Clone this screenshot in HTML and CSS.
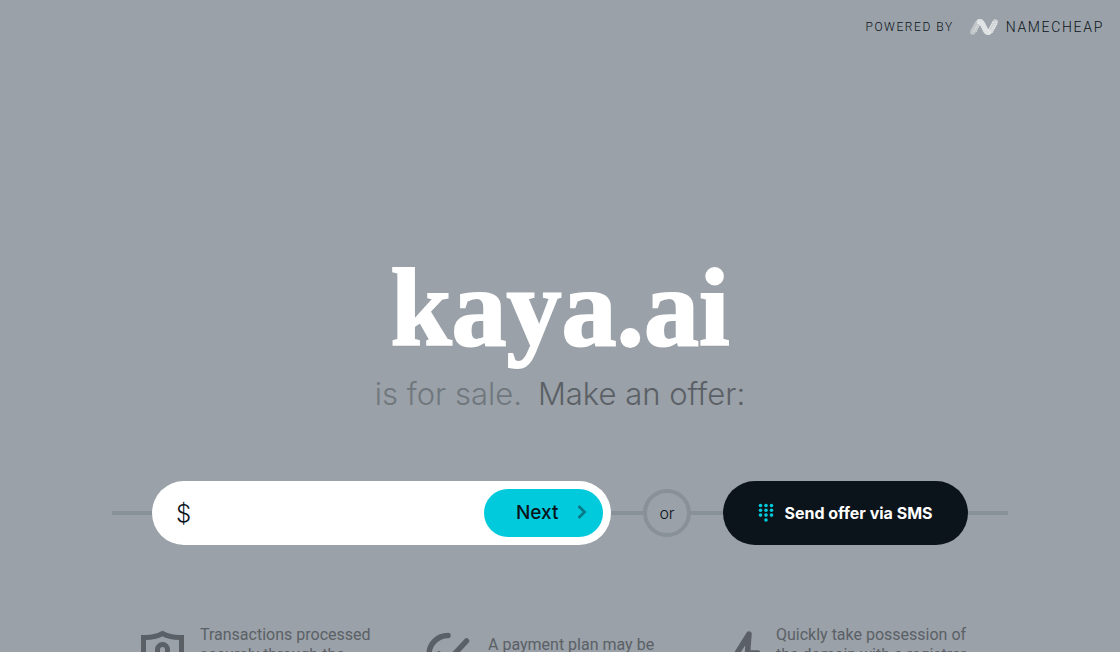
FILE: index.html
```html
<!DOCTYPE html>
<html lang="en">
<head>
<meta charset="utf-8">
<meta name="viewport" content="width=device-width, initial-scale=1">
<title>kaya.ai is for sale</title>
<link rel="stylesheet" href="styles.css">
</head>
<body>
<header class="topbar">
  <span class="powered">POWERED BY</span>
  <a class="brand" href="#">
    <svg class="brand-logo" viewBox="0 0 28 16" fill="none" stroke-linecap="round" stroke-linejoin="round" aria-hidden="true">
      <path d="M2.800 13 7 5Q8.500 2.800 10.500 2.800" stroke="#c0c5c8" stroke-width="5.500"/>
      <path d="M17.500 13.200Q19.500 13.200 21 11L25.200 3" stroke="#ced2d4" stroke-width="5.500"/>
      <path d="M9.500 2.800Q11.500 2.800 12.500 5L15.500 11Q16.500 13.200 18.500 13.200" stroke="#e0e3e4" stroke-width="5.500"/>
      <path d="M4 12 8.500 4M6.500 12 9.500 6M20.500 13 26 3M18.500 11 23.500 2.500M22.500 13 27 4.500" stroke="#f9fafa" stroke-width="1.100" stroke-dasharray="0 2.200"/>
    </svg>
    <span class="brand-name">NAMECHEAP</span>
  </a>
</header>
<main class="page">
  <h1 class="domain">kaya.ai</h1>
  <p class="tagline"><span class="sale">is for sale.</span><span class="offer">Make an offer:</span></p>
  <form class="offer-row">
    <div class="amount">
      <label class="currency" for="amount">$</label>
      <input class="amount-input" id="amount" type="text" inputmode="numeric">
      <button class="next" type="submit">
        <span>Next</span>
        <svg class="chevron" viewBox="0 0 10 14" fill="none" stroke="#087b88" stroke-width="2.800" aria-hidden="true"><path d="M1.500 1 7.500 7 1.500 13"/></svg>
      </button>
    </div>
    <span class="or">or</span>
    <button class="sms" type="button">
      <svg class="keypad" viewBox="0 0 16 20" fill="#00cadb" aria-hidden="true">
        <circle cx="2.500" cy="2.500" r="1.800"/><circle cx="8" cy="2.500" r="1.800"/><circle cx="13.500" cy="2.500" r="1.800"/>
        <circle cx="2.500" cy="7.300" r="1.800"/><circle cx="8" cy="7.300" r="1.800"/><circle cx="13.500" cy="7.300" r="1.800"/>
        <circle cx="2.500" cy="12.100" r="1.800"/><circle cx="8" cy="12.100" r="1.800"/><circle cx="13.500" cy="12.100" r="1.800"/>
        <circle cx="8" cy="17" r="1.800"/>
      </svg>
      <span>Send offer via SMS</span>
    </button>
  </form>
  <section class="features">
    <div class="feature">
      <svg class="feature-icon" viewBox="0 0 48 48" fill="none" stroke="#5a6066" stroke-width="5" aria-hidden="true">
        <path d="M7.500 8.500Q18 9 26.500 4.500 35 9 45.500 8.500V25Q45.500 38 26.500 45 7.500 38 7.500 25Z"/>
        <path d="M21.500 25V20.500A5 5 0 0 1 31.500 20.500V25"/><path d="M18 24H35V35H18Z" fill="#5a6066" stroke="none"/>
      </svg>
      <p class="feature-text">Transactions processed<br>securely through the</p>
    </div>
    <div class="feature feature-short">
      <svg class="feature-icon" viewBox="0 0 48 48" fill="none" stroke="#5a6066" stroke-width="5.500" stroke-linecap="round" stroke-linejoin="round" aria-hidden="true">
        <path d="M24 6.500A19 19 0 1 0 43 26M15 25 23 33 42.500 12"/>
      </svg>
      <p class="feature-text">A payment plan may be</p>
    </div>
    <div class="feature">
      <svg class="feature-icon" viewBox="0 0 48 48" fill="none" stroke="#5a6066" stroke-width="5.500" stroke-linecap="round" stroke-linejoin="round" aria-hidden="true">
        <path d="M37 5 22 29H32L30 46 46 24H35.500Z"/>
      </svg>
      <p class="feature-text">Quickly take possession of<br>the domain with a registrar</p>
    </div>
  </section>
</main>
</body>
</html>
```
FILE: styles.css
```css
* { box-sizing: border-box; }
body {
  margin: 0;
  height: 100vh;
  overflow: hidden;
  background: #9aa1a8;
  color: #0b141a;
  font-family: Inter, "Open Sans", sans-serif;
}
.topbar {
  display: flex;
  justify-content: flex-end;
  align-items: center;
  gap: 16px;
  padding: 16px 16px 0;
  height: 38px;
  font-family: Roboto, sans-serif;
  font-weight: 300;
}
.powered { font-size: 12px; letter-spacing: 0.13em; }
.brand {
  display: flex;
  align-items: center;
  gap: 8px;
  color: inherit;
  text-decoration: none;
}
.brand-logo { width: 28px; height: 16px; }
.brand-name { font-size: 14px; letter-spacing: 0.12em; }
.page {
  width: 80%;
  margin: 0 auto;
  padding-top: 210px;
}
.domain {
  margin: 0;
  text-align: center;
  color: #fff;
  font: bold 110px/120px "Liberation Serif", serif;
  -webkit-text-stroke: 2px #fff;
  text-shadow: 0 1px 1px #7d858c;
}
.tagline {
  display: flex;
  justify-content: center;
  gap: 16px;
  margin: 4px 0 0;
  font-size: 31px;
  line-height: 44px;
  font-weight: 300;
}
.sale { color: #70777d; }
.offer { color: #5a6066; }
.offer-row {
  display: flex;
  align-items: center;
  gap: 32px;
  margin-top: 65px;
  padding: 0 40px;
  background: linear-gradient(#899198, #899198) center / 100% 4px no-repeat;
}
.amount {
  flex: 1;
  min-width: 0;
  display: flex;
  align-items: center;
  height: 64px;
  padding: 8px 8px 8px 24px;
  border-radius: 32px;
  background: #fff;
}
.currency { font-size: 24px; font-weight: 300; }
.amount-input {
  flex: 1;
  min-width: 0;
  height: 48px;
  padding: 0 8px;
  border: 0;
  outline: 0;
  background: transparent;
  font: 300 24px Inter, sans-serif;
}
.next {
  display: flex;
  align-items: center;
  justify-content: space-between;
  width: 119px;
  height: 48px;
  padding: 0 16px 2px 32px;
  border: 0;
  border-radius: 24px;
  background: #00cadb;
  color: #0b141a;
  font: 500 19px Inter, sans-serif;
}
.chevron { width: 10px; height: 14px; }
.or {
  display: flex;
  align-items: center;
  justify-content: center;
  width: 48px;
  height: 48px;
  border: 4px solid #899198;
  border-radius: 50%;
  background: #9aa1a8;
  font-size: 16px;
  font-weight: 300;
}
.sms {
  display: flex;
  align-items: center;
  justify-content: center;
  gap: 10px;
  width: 245px;
  height: 64px;
  padding: 0;
  border: 0;
  border-radius: 32px;
  background: #0b141a;
  color: #fff;
  font: 700 16px Inter, sans-serif;
}
.keypad { width: 16px; height: 20px; }
.features {
  display: grid;
  grid-template-columns: repeat(3, 1fr);
  margin: 80px 8px 0 24px;
  color: #5a6066;
  font: 16px/20px Roboto, sans-serif;
}
.feature { display: flex; gap: 16px; }
.feature-icon { flex: none; width: 48px; height: 48px; margin-top: 4px; }
.feature-text { margin: 0; white-space: nowrap; }
.feature-short .feature-text { padding-top: 10px; }
```
